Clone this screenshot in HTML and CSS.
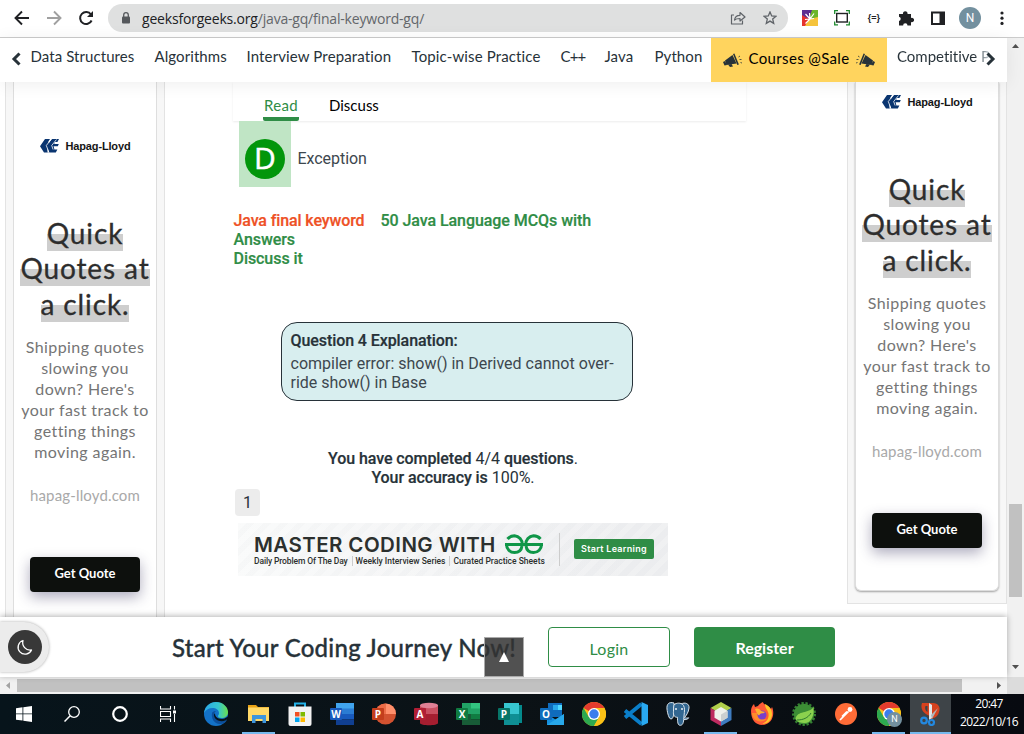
FILE: index.html
```html
<!DOCTYPE html>
<html lang="en">
<head>
<meta charset="utf-8">
<title>Java final keyword - GeeksforGeeks</title>
<link rel="stylesheet" href="styles.css">
</head>
<body>
<svg class="defs" aria-hidden="true">
  <symbol id="hl" viewBox="0 0 20 14"><path fill="#0a3570" d="M5 0h14l-1.600 3h-2.600l-.6 2h4.600l-1 2.200h-4.200l.8 3.400h3L15.800 13.500H4L0 7.300z"/><path stroke="#fff" stroke-width=".8" fill="none" d="M11.500 0L6.300 6.500l2.600 7M16.500 .5l-4.800 6 1.400 4"/><path fill="#fff" d="M10 0h1.800L9.300 3.500h-1.500zM7.500 9l1.800 4.500H7.500z"/></symbol>
  <symbol id="horn" viewBox="0 0 20 16"><g fill="#273239"><path d="M2 8.500l7.500-5.500 4 8.500-10 1.500z"/><path d="M0 10l2-1 2 4-2.500.6zM5 12.500l3.500-.5 1.500 2.500-3 .4z"/><path d="M10 2l1.400-.5 4.500 11-1.600.5z"/></g><path d="M15.500 5l1.500-1M16.500 7.500h2M17.500 10.500l1.500.5" stroke="#273239" stroke-width=".8" fill="none"/></symbol>
  <symbol id="chrome" viewBox="0 0 24 24"><circle cx="12" cy="12" r="12" fill="#fbc116"/><path fill="#e33b2e" d="M12 12L1.600 6A12 12 0 0 1 22.400 6H12z"/><path fill="#2da94f" d="M12 12L6.800 15 1.600 6A12 12 0 0 0 12 24l5.200-9z"/><path fill="#fbc116" d="M12 6h10.400A12 12 0 0 1 12 24l5.200-9z"/><circle cx="12" cy="12" r="6" fill="#fff"/><circle cx="12" cy="12" r="4.700" fill="#3b7ded"/></symbol>
</svg>

<header class="toolbar">
  <svg class="tb-back" width="16" height="16" viewBox="0 0 16 16"><path d="M15 8H2M8 1.500L1.500 8 8 14.500" fill="none" stroke="#202124" stroke-width="1.900"/></svg>
  <svg class="tb-fwd" width="16" height="16" viewBox="0 0 16 16"><path d="M1 8h13M8 1.500L14.500 8 8 14.500" fill="none" stroke="#a0a0a0" stroke-width="1.900"/></svg>
  <svg class="tb-reload" width="16" height="16" viewBox="0 0 16 16"><path d="M13.600 10.500A6 6 0 1 1 13 4.500" fill="none" stroke="#202124" stroke-width="2"/><path d="M15 1v6H9z" fill="#202124"/></svg>
  <div class="omnibox">
    <svg class="lock" width="10" height="12" viewBox="0 0 10 12"><rect x="1" y="4.500" width="8" height="7" rx="1" fill="#55585c"/><path d="M2.700 5V3a2.300 2.300 0 0 1 4.600 0v2" fill="none" stroke="#55585c" stroke-width="1.300"/></svg>
    <span class="url"><b>geeksforgeeks.org</b>/java-gq/final-keyword-gq/</span>
    <svg class="share" width="16" height="14" viewBox="0 0 16 14"><path d="M4 4H1.500v9h11V9.500M4.500 9c.5-3.500 3-4.700 5.500-4.700V1.500L15 6l-5 4V7.500c-2.500 0-4 0-5.500 1.500z" fill="none" stroke="#5f6368" stroke-width="1.200" stroke-linejoin="round"/></svg>
    <svg class="star" width="14" height="14" viewBox="0 0 14 14"><path d="M7 1l1.700 4 4.300.3-3.300 2.800 1 4.300L7 10.100l-3.700 2.300 1-4.300L1 5.300 5.300 5z" fill="none" stroke="#5f6368" stroke-width="1.300"/></svg>
  </div>
  <div class="extensions">
    <svg width="16" height="16" viewBox="0 0 16 16"><path fill="#5c2d91" d="M0 0h16v16H0z"/><path fill="#e5322d" d="M0 5l7 4-3 7H0z"/><path fill="#6bb52c" d="M10 0h6v8L7 9z"/><path fill="#f5c33b" d="M7 9l9-2v9H3z"/><path d="M3.500 4L8 9M8 9L7.500 3M8 9l4-5.500M8 9l-4.500 4.500M8 9l-5 .5M8 9l4-.5" stroke="#fff" stroke-width="1.200"/></svg>
    <svg width="16" height="16" viewBox="0 0 16 16"><path d="M.7 4V.7H4M12 .7h3.300V4M15.300 11.500v3.300H12M4 14.800H.7v-3.300" fill="none" stroke="#1e8a2f" stroke-width="1.300"/><rect x="2.700" y="3.500" width="10.600" height="8.500" fill="none" stroke="#202124" stroke-width="1.400"/></svg>
    <span class="braces">{=}</span>
    <svg width="16" height="16" viewBox="0 0 16 16"><path fill="#202124" d="M1 4h4a2.300 2.300 0 1 1 4.500 0H13v4a2.200 2.200 0 1 1 0 4v3.500H9.500a2.200 2.200 0 0 0-4.400 0H1V11a2.200 2.200 0 0 0 0-4.300z"/></svg>
    <svg width="16" height="16" viewBox="0 0 16 16"><rect x="2" y="2.500" width="12" height="11.500" fill="#fff" stroke="#202124" stroke-width="2"/><path fill="#202124" d="M9.500 2h5v12h-5z"/></svg>
    <span class="avatar">N</span>
    <svg width="16" height="16" viewBox="0 0 16 16"><g fill="#202124"><circle cx="8" cy="3" r="1.600"/><circle cx="8" cy="8.200" r="1.600"/><circle cx="8" cy="13.400" r="1.600"/></g></svg>
  </div>
</header>

<div class="viewport">
  <div class="page">
    <nav class="topnav">
      <svg class="chev" width="12" height="14" viewBox="0 0 12 14"><path d="M9.500 1.500L4 7l5.500 5.500" fill="none" stroke="#273239" stroke-width="3"/></svg>
      <div class="links">
        <a>Data Structures</a><a>Algorithms</a><a class="w">Interview Preparation</a><a class="w">Topic-wise Practice</a><a class="cpp">C++</a><a>Java</a><a>Python</a>
      </div>
      <div class="sale"><svg width="20" height="16"><use href="#horn"/></svg><span>Courses @Sale</span><svg class="flip" width="20" height="16"><use href="#horn"/></svg></div>
      <div class="last"><a>Competitive P</a></div>
      <svg class="chev-r" width="12" height="14" viewBox="0 0 12 14"><path d="M2.500 1.500L8 7l-5.500 5.500" fill="none" stroke="#273239" stroke-width="3"/></svg>
    </nav>

    <div class="columns">
      <aside class="ad ad-left">
        <div class="card">
          <div class="brand"><svg width="20" height="14"><use href="#hl"/></svg><span>Hapag-Lloyd</span></div>
          <h2><span>Quick</span><br><span>Quotes at</span><br><span>a click.</span></h2>
          <p>Shipping quotes<br>slowing you<br>down? Here's<br>your fast track to<br>getting things<br>moving again.</p>
          <div class="domain">hapag-lloyd.com</div>
          <div class="cta">Get Quote</div>
        </div>
      </aside>

      <main class="article">
        <div class="tabs"><span class="tab current">Read</span><span class="tab">Discuss</span></div>
        <div class="option"><div class="mark"><span>D</span></div><span>Exception</span></div>
        <div class="related"><a class="red">Java final keyword</a><a>50 Java Language MCQs with</a><br><a>Answers</a><br><a>Discuss it</a></div>
        <section class="explain"><b>Question 4 Explanation:</b><div>compiler error: show() in Derived cannot over-<br>ride show() in Base</div></section>
        <div class="result"><b>You have completed</b> 4/4 <b>questions</b>.<br><b>Your accuracy is</b> 100%.</div>
        <div class="pager">1</div>
        <div class="banner">
          <div class="pitch">
            <div class="line1"><span>MASTER CODING WITH</span>
              <svg width="40" height="21" viewBox="0 0 40 21"><g fill="none" stroke="#0f9648" stroke-width="3"><path d="M3.500 5C5.500 2.500 8 1.800 10.500 1.800a8.400 8.400 0 0 1 7.700 8.700H2.500c0 4.500 3.500 8 8 8s7-3 7.500-6.500"/><path d="M36.500 5c-2-2.500-4.500-3.200-7-3.200a8.400 8.400 0 0 0-7.700 8.700h15.700c0 4.500-3.500 8-8 8s-7-3-7.500-6.500"/><path d="M1 10.500h38"/></g></svg></div>
            <div class="line2"><span>Daily Problem Of The Day</span><span>Weekly Interview Series</span><span>Curated Practice Sheets</span></div>
          </div>
          <div class="start">Start Learning</div>
        </div>
      </main>

      <aside class="ad ad-right">
        <div class="card">
          <div class="brand"><svg width="20" height="14"><use href="#hl"/></svg><span>Hapag-Lloyd</span></div>
          <h2><span>Quick</span><br><span>Quotes at</span><br><span>a click.</span></h2>
          <p>Shipping quotes<br>slowing you<br>down? Here's<br>your fast track to<br>getting things<br>moving again.</p>
          <div class="domain">hapag-lloyd.com</div>
          <div class="cta">Get Quote</div>
        </div>
      </aside>
    </div>

    <footer class="signup">
      <div class="dark-toggle"><span><svg width="18" height="18" viewBox="0 0 18 18"><path d="M7 2.500A7 7 0 1 0 15.500 12 7.500 7.500 0 0 1 7 2.500z" fill="none" stroke="#fff" stroke-width="1.300" stroke-linejoin="round"/></svg></span></div>
      <span class="slogan">Start Your Coding Journey Now!</span>
      <div class="to-top"><svg width="10" height="10" viewBox="0 0 10 10"><path d="M5 0l5 10H0z" fill="#fff"/></svg></div>
      <a class="login">Login</a><a class="register">Register</a>
    </footer>
  </div>
  <div class="vscroll"><svg width="7" height="4" viewBox="0 0 7 4"><path d="M3.500 0L7 4H0z" fill="#505050"/></svg><div class="vthumb"></div><svg width="7" height="4" viewBox="0 0 7 4"><path d="M3.500 4L0 0h7z" fill="#505050"/></svg></div>
</div>
<div class="hscroll"><svg class="al" width="4" height="7" viewBox="0 0 4 7"><path d="M0 3.500L4 0v7z" fill="#a3a3a3"/></svg><div class="hthumb"></div><svg class="ar" width="4" height="7" viewBox="0 0 4 7"><path d="M4 3.500L0 0v7z" fill="#505050"/></svg><div class="corner"></div></div>

<div class="taskbar">
  <div class="sys"><svg width="16" height="16" viewBox="0 0 16 16"><path fill="#fff" d="M0 2.200L6.500 1.300v6.200H0zM7.300 1.200L16 0v7.500H7.300zM0 8.300h6.500v6.300L0 13.700zM7.300 8.300H16V16l-8.700-1.200z"/></svg></div>
  <div class="sys"><svg width="16" height="16" viewBox="0 0 16 16"><circle cx="10" cy="6" r="5.300" fill="none" stroke="#fff" stroke-width="1.300"/><path d="M6.200 9.800L.5 15.500" stroke="#fff" stroke-width="1.500"/></svg></div>
  <div class="sys"><svg width="16" height="16" viewBox="0 0 16 16"><circle cx="8" cy="8" r="6.800" fill="none" stroke="#fff" stroke-width="2.200"/></svg></div>
  <div class="sys"><svg width="16" height="16" viewBox="0 0 16 16"><path d="M.5 0v3h10V0M.5 16v-3h10v3M.5 5.500h10v5H.5zM14.500 0v3.500M14.500 8v8" fill="none" stroke="#fff" stroke-width="1.100"/><path fill="#fff" d="M13 4.500h3v3h-3z"/></svg></div>
  <div class="apps">
    <div class="app"><svg width="24" height="24" viewBox="0 0 24 24"><defs><linearGradient id="eg" x1="0" x2="1"><stop offset="0" stop-color="#2ba8e6"/><stop offset=".6" stop-color="#35c6d0"/><stop offset="1" stop-color="#6be04b"/></linearGradient></defs><circle cx="12" cy="12" r="12" fill="#1372c8"/><path fill="url(#eg)" d="M0 11C1 4 6 0 12 0c7 0 12 5 12 10 0 4-3 6-6.500 6-2.500 0-3.500-1-3.500-2 0-.8 1-1 1-3 0-3-3-5-6.500-5C5 6 2 7.500 0 11z"/><path fill="#0c4f9c" d="M8 11c-1 5 2 11 8 11 3 0 5-1 7-4-5 2-12 1-13-5 0-3 2-4 2-4s-3 0-4 2z"/><path fill="#07141b" d="M11 11.500c0 4 4 6 9 5.300l4-2.300v2l-2.500 2c-6 2-11-1-11.500-5 0-1.500.5-2 1-2z"/></svg></div>
    <div class="app open"><svg width="24" height="24" viewBox="0 0 24 24"><path fill="#e8a216" d="M1 3h8l2 2h11v5H1z"/><path fill="#ffd968" d="M1 5.500h21V19H1z"/><path fill="#3d95dd" d="M5 13h14v8h-3.500v-4h-7v4H5z"/></svg></div>
    <div class="app"><svg width="24" height="24" viewBox="0 0 24 24"><path d="M7 6V1.500h10V6" fill="none" stroke="#24b2e8" stroke-width="2"/><path fill="#f2f2f2" d="M.5 4.500h23V22a2 2 0 0 1-2 2h-19a2 2 0 0 1-2-2z"/><path fill="#f25022" d="M7 10h4.500v4.500H7z"/><path fill="#7fba00" d="M12.500 10H17v4.500h-4.500z"/><path fill="#00a4ef" d="M7 15.500h4.500V20H7z"/><path fill="#ffb900" d="M12.500 15.500H17V20h-4.500z"/></svg></div>
    <div class="app office word"><svg width="24" height="24" viewBox="0 0 24 24"><path fill="#41a5ee" d="M6 1h18v6H6z"/><path fill="#2b7cd3" d="M6 6.500h18V12H6z"/><path fill="#185abd" d="M6 12h18v5.500H6z"/><path fill="#103f91" d="M6 17.500h18V23H6z"/></svg><b>W</b></div>
    <div class="app office ppt"><svg width="24" height="24" viewBox="0 0 24 24"><circle cx="13.500" cy="12" r="10.500" fill="#d35230"/><path fill="#ff8f6b" d="M13.500 1.500A10.500 10.500 0 0 1 24 12H13.500z"/><path fill="#ed6c47" d="M13.500 1.500V12H3A10.500 10.500 0 0 1 13.500 1.500z"/></svg><b>P</b></div>
    <div class="app office access"><svg width="24" height="24" viewBox="0 0 24 24"><path fill="#c94f60" d="M6 3h18v10H6z"/><path fill="#a51e30" d="M6 12h18v9c0 3-18 3-18 0z"/><ellipse cx="15" cy="3.500" rx="9" ry="2.700" fill="#e08095"/></svg><b>A</b></div>
    <div class="app office excel"><svg width="24" height="24" viewBox="0 0 24 24"><path fill="#21a366" d="M6 1h18v11H6z"/><path fill="#33c481" d="M15 1h9v5.500h-9z"/><path fill="#107c41" d="M15 12h9v5.500h-9z"/><path fill="#185c37" d="M6 12h9v5.500h9V23H6z"/></svg><b>X</b></div>
    <div class="app office pub"><svg width="24" height="24" viewBox="0 0 24 24"><path fill="#048a8c" d="M10 3h14v18H10z"/><path fill="#37c6d0" d="M6 1h15v11H6z"/><path fill="#0f8f94" d="M6 12h15v11H6z"/></svg><b>P</b></div>
    <div class="app office outlook"><svg width="24" height="24" viewBox="0 0 24 24"><path fill="#0f6cbd" d="M8 1h14v14H8z"/><path fill="#28a8ea" d="M13 3h5v5h-5z"/><path fill="#50d9ff" d="M18 3h4v5h-4z"/><path fill="#1490df" d="M7 12l8.500 5.500L24 12v11H7z"/><path fill="#28a8ea" d="M24 12v11L7 23z"/></svg><b>O</b></div>
    <div class="app"><svg width="24" height="24"><use href="#chrome"/></svg></div>
    <div class="app"><svg width="24" height="24" viewBox="0 0 24 24"><path d="M1 8.500L17.500 22M1 15.500L17.500 2" stroke="#0a7ec9" stroke-width="3.800"/><path fill="#29a9f1" d="M17.500 0L24 3v18l-6.500 3z"/></svg></div>
    <div class="app"><svg width="24" height="24" viewBox="0 0 24 24"><g fill="#336791" stroke="#dce6ee" stroke-width="1"><path d="M8 1C3-.5.500 2 1 7c.4 4 2 10 4 10s2-3 3-4z"/><path d="M15 2c4-2 8.500-.5 8 4-.3 4-3 8-4.500 9.500 1 .8 3 .5 4.200.3-1 1.700-3 2-5 1.700z"/><path d="M9 2c3-1.500 7-1 8.500 1.500S18.500 9 18 14c-.3 5-.5 9-3.500 9.300-3 .3-3-4-3-8-3 .2-4.500-2-4-6C7.800 6 7 3.500 9 2z"/></g><circle cx="10" cy="7" r=".9" fill="#fff"/><circle cx="16" cy="7" r=".9" fill="#fff"/></svg></div>
    <div class="app open"><svg width="24" height="24" viewBox="0 0 24 24"><path fill="#b1cf4b" d="M12 0l10.500 6L12 12 1.500 6z"/><path fill="#be2b60" d="M1.500 6L12 12v12L1.500 18z"/><path fill="#3f7cc0" d="M22.500 6L12 12v12l10.500-6z"/><path fill="#eff1ec" d="M12 5l6.500 3.800v7L12 19.500l-6.500-3.700v-7z"/><path fill="#cbd0d0" d="M12 12.500l6.500-3.700v7L12 19.500z"/></svg></div>
    <div class="app"><svg width="24" height="24" viewBox="0 0 24 24"><path fill="#ff5a36" d="M1 9c0-3 1-5 3-7l1 3 3-1c1-2 3-3 5-4 0 3 6 3 8 7l1-2c3 6 1 18-10 18C6 23 1 18 1 9z"/><path fill="#ffc629" d="M15 2c4 2 7 5 7 10 0 6-4 10-10 10 5-2 8-7 6-12-1-3-3-4-3-8z"/><path fill="#ff8c2a" d="M2 12c1 7 9 10 15 5-5 1-9-1-10-6H2z"/><circle cx="12" cy="13" r="4.500" fill="#7940c9"/><path fill="#ffb02e" d="M5 7c3-1 5 0 6 2l4 1c-2 2-3 1-5 2-1 3-3 0-5-5z"/></svg></div>
    <div class="app"><svg width="24" height="24" viewBox="0 0 24 24"><circle cx="12" cy="12" r="10.800" fill="none" stroke="#357f32" stroke-width="2.400" stroke-dasharray="2.300 1.700"/><circle cx="12" cy="12" r="10.300" fill="#3c8d35"/><path fill="#8bd14e" d="M21.500 5c1 8-2 16-9 16-4 0-7-1-9-4C5 8 17 12 21.500 5z"/><path d="M5 18c6 0 11-2 14-7" fill="none" stroke="#2c7a2f" stroke-width="1"/></svg></div>
    <div class="app"><svg width="24" height="24" viewBox="0 0 24 24"><circle cx="12" cy="12" r="11" fill="#ff6c37"/><path d="M6 18l8.500-8.500M8 14.500l5-5" stroke="#fff" stroke-width="1.700"/><circle cx="16" cy="7.500" r="2.400" fill="#fff"/></svg></div>
    <div class="app open"><svg width="24" height="24"><use href="#chrome"/></svg><span class="badge">N</span></div>
    <div class="app open active"><svg width="24" height="24" viewBox="0 0 24 24"><path fill="#d6421e" d="M3 1h11c5 0 8 4 6 9-1 4-4 6-8 7l-1-3C4 12 1 6 3 1z"/><path fill="#3e4448" d="M6.500 4h2v6c-2-1-3-4-2-6z"/><path fill="#e4e6e7" d="M10 1l3 2v13l-3 2z"/><path fill="#aeb4b8" d="M19 6l-6 11-1-4z"/><g fill="none" stroke="#2389e0" stroke-width="2.200"><circle cx="5" cy="18.500" r="2.800"/><circle cx="12.500" cy="20.500" r="2.500"/></g></svg></div>
  </div>
  <div class="clock"><span>20:47</span><span>2022/10/16</span></div>
</div>
</body>
</html>
```

FILE: styles.css
```css
* { box-sizing: border-box; }
body { margin: 0; width: 1024px; height: 734px; overflow: hidden; display: flex; flex-direction: column; background: #fff; color: #273239; font-family: Roboto, sans-serif; }
svg { display: block; flex: none; }
.defs { width: 0; height: 0; position: absolute; }

/* Browser toolbar */
.toolbar { flex: none; height: 38px; padding: 0 0 1px 14px; display: flex; align-items: center; border-bottom: 1px solid #ccc; background: #fff; }
.tb-fwd, .tb-reload { margin-left: 16px; }
.omnibox { margin-left: 14px; width: 680px; height: 28px; border-radius: 14px; background: #dfe0e0; display: flex; align-items: center; padding: 0 11px 0 13px; }
.url { margin-left: 11px; margin-right: auto; font: 14px "Open Sans", sans-serif; letter-spacing: -.19px; color: #63666a; }
.url b { font-weight: 400; color: #202124; }
.star { margin-left: 17px; }
.extensions { margin-left: 6px; display: grid; grid-template-columns: repeat(7, 32px); width: 224px; justify-items: center; align-items: center; }
.braces { font: 700 9px "Liberation Sans", sans-serif; color: #202124; }
.avatar { width: 22px; height: 22px; border-radius: 50%; background: #73909f; color: #fff; font: 12px/22px Roboto, sans-serif; text-align: center; }

/* Web page area */
.viewport { flex: none; height: 639px; display: flex; }
.page { width: 1007px; display: flex; flex-direction: column; }
.topnav { flex: none; height: 44px; display: flex; position: relative; z-index: 2; background: #fff; font: 15px/20px Lato, sans-serif; letter-spacing: .08px; box-shadow: 0 2px 18px rgba(0,0,0,.07); color: #273239; }
.chev { margin: 14px 0 0 10px; }
.links { margin-left: 8.500px; width: 680.500px; padding-top: 8px; display: grid; grid-template-columns: 124px 92px 165px 149px 44px 50px 56px; white-space: nowrap; }
.links .w { letter-spacing: .13px; }
.links .cpp { letter-spacing: -.8px; }
.sale { width: 176px; background: #ffd45e; color: #000; display: flex; align-items: center; padding: 0 12px 5px; white-space: nowrap; letter-spacing: .36px; justify-content: space-between; }
.sale svg { margin-top: 5px; }
.flip { transform: scaleX(-1); }
.last { margin-left: 10px; padding-top: 8px; width: 88px; white-space: nowrap; }
.last a { background: linear-gradient(90deg, #273239 84%, #b9c3c9 98%); background-clip: text; color: transparent; letter-spacing: -.02px; }
.chev-r { margin: 14px 0 0 0; }

.columns { flex: none; height: 535px; display: flex; align-items: flex-start; overflow: hidden; background: #fff; }
.ad { flex: none; width: 160px; border: 1px solid #e3e3e3; border-top: 0; background: #f7f7f7; padding: 0 7px; }
.ad-left { margin-left: 5px; height: 600px; }
.ad-right { height: 522px; }
.card { height: 560px; width: 144px; background: #fff; border: 1px solid #dedede; border-top: 0; text-align: center; font-family: Lato, sans-serif; padding-top: 54px; }
.ad-right .card { height: 509px; padding-top: 10px; border-radius: 0 0 6px 6px; box-shadow: 0 1px 2px rgba(0,0,0,.35); }
.brand { height: 20px; display: flex; align-items: center; justify-content: center; gap: 6px; font: 700 11px "Liberation Sans", sans-serif; letter-spacing: -.15px; color: #151515; }
.card h2 { margin: 59.500px -4px 0; font-weight: 400; font-size: 28px; line-height: 35.5px; letter-spacing: .87px; color: #2d2d2d; -webkit-text-stroke: .3px; }
.card h2 span { padding-bottom: 1px; background: linear-gradient(transparent 52%, #cecece 52%); }
.card p { margin: 15px -4px 0; font-size: 16px; line-height: 20.900px; letter-spacing: .42px; color: #757575; }
.domain { margin-top: 23.500px; font-size: 15px; line-height: 18px; letter-spacing: .15px; color: #a9a9a9; }
.cta { width: 110px; height: 35px; margin: 53px auto 0; border-radius: 4px; background: #0d100d; color: #fff; font: 700 13px/33px Lato, sans-serif; box-shadow: 0 5px 14px rgba(50,45,90,.4); }

.article { flex: none; width: 682px; padding-left: 68px; font-size: 16px; line-height: 19px; }
.tabs { width: 513px; height: 39px; display: flex; gap: 30px; padding: 14px 0 0 30px; background: #fff; box-shadow: 0 1px 2px rgba(0,0,0,.08); font: 15px/20px Lato, sans-serif; color: #000; }
.tab { margin-top: -1px; }
.tab.current { width: 36px; height: 26px; padding-left: 1px; letter-spacing: .3px; color: #2f8d46; border-bottom: 4px solid #2f8d46; border-radius: 0 0 2px 2px; }
.option { display: flex; align-items: center; gap: 6.500px; margin-left: 6px; height: 66px; }
.option > span { padding-top: 8px; color: #3d474e; letter-spacing: -.05px; }
.mark { width: 52px; height: 66px; background: #c0e5c5; padding: 18px 6px 0; }
.mark span { display: block; width: 40px; height: 40px; border-radius: 50%; background: #02960b; color: #fff; font: 30px/38px "Open Sans", sans-serif; -webkit-text-stroke: .5px #fff; text-align: center; }
.related { margin: 24px 0 0 .5px; color: #2f8d46; font-weight: 500; letter-spacing: -.06px; -webkit-text-stroke: .2px; }
.related .red { color: #ee5126; margin-right: 16px; letter-spacing: -.12px; }
.explain { margin: 54px 0 0 48px; width: 352px; height: 79px; border: 1px solid #273239; border-radius: 16px; background: #d8eeef; padding: 8px 0 0 8.500px; white-space: nowrap; }
.explain b, .result b { font-weight: 500; letter-spacing: -.08px; -webkit-text-stroke: .2px; }
.explain div { margin-top: 4px; color: #3d474e; }
.result { margin-top: 48px; width: 440px; text-align: center; }
.pager { margin: 2px 0 0 2px; width: 25px; height: 27px; line-height: 27px; border-radius: 4px; background: #ececec; text-align: center; }
.banner { margin: 7px 0 0 5px; width: 430px; height: 53px; display: flex; align-items: flex-start; padding: 10px 0 0 16px; background: repeating-linear-gradient(135deg, rgba(255,255,255,.16) 0 6px, rgba(225,227,230,.1) 6px 12px), linear-gradient(90deg, #f9fafa, #edeef0 90%); }
.pitch { width: 306px; height: 33px; border-right: 1px solid #ccc; white-space: nowrap; color: #2c302e; }
.line1 { display: flex; align-items: center; gap: 8px; height: 22px; font: 600 20.500px/22px Inter, sans-serif; letter-spacing: .42px; padding-top: 1px; }
.line2 { display: flex; gap: 4px; font: 500 8.500px/10px Roboto, sans-serif; letter-spacing: -.12px; margin-top: 1px; }
.line2 span + span { border-left: 1px solid #ccc; padding-left: 3px; letter-spacing: -.01px; }
.start { margin: 6px 0 0 14px; width: 80px; height: 20px; border-radius: 2px; background: #2f8d46; color: #fff; font: 600 9px/20px Inter, sans-serif; letter-spacing: .3px; text-align: center; white-space: nowrap; }

.signup { flex: none; height: 60px; position: relative; z-index: 2; display: flex; align-items: center; background: #fff; box-shadow: 0 -1px 6px rgba(0,0,0,.3); font-family: Lato, sans-serif; }
.dark-toggle { width: 49px; height: 50px; margin-top: -1px; border-radius: 0 25px 25px 0; background: #ececec; box-shadow: 0 0 3px rgba(0,0,0,.35); padding: 8px 7.500px; }
.dark-toggle span { width: 34px; height: 34px; border-radius: 50%; background: #383838; display: flex; align-items: center; justify-content: center; }
.slogan { margin-left: 123px; width: 376px; font-weight: 500; font-size: 24px; letter-spacing: .27px; white-space: nowrap; -webkit-text-stroke: .35px; }
.to-top { position: absolute; left: 484px; top: 20px; width: 40px; height: 40px; background: rgba(50,50,50,.85); border: 1px solid #aaa; display: flex; align-items: center; justify-content: center; }
.login, .register { height: 40px; border-radius: 4px; text-align: center; font-size: 16px; line-height: 41px; }
.login { width: 122px; border: 1px solid #2f8d46; color: #2f8d46; letter-spacing: .25px; }
.register { margin-left: 24px; width: 141px; background: #2f8d46; color: #fff; font-weight: 700; line-height: 42px; }

/* Scrollbars */
.vscroll { width: 17px; background: #f1f1f1; display: flex; flex-direction: column; align-items: center; padding: 6px 1px 8px 0; }
.vthumb { width: 13px; height: 93px; margin: 456px 0 auto; background: #c1c1c1; }
.hscroll { flex: none; height: 17px; background: #f1f1f1; display: flex; align-items: center; padding-left: 6px; }
.hthumb { margin-left: 7px; width: 945px; height: 13px; background: #c1c1c1; }
.ar { margin-left: 35px; }
.corner { margin-left: auto; width: 17px; height: 17px; background: #dcdcdc; }

/* Taskbar */
.taskbar { flex: none; height: 40px; display: flex; background: linear-gradient(90deg, #07141b, #0b1216 50%, #070a10); }
.sys { width: 48px; display: flex; align-items: center; justify-content: center; }
.apps { margin-left: 3px; display: grid; grid-template-columns: repeat(18, 42px); }
.app { display: flex; align-items: center; justify-content: center; position: relative; }
.open { box-shadow: inset 0 -2px #76b9ed; margin: 0 4px 0 5px; }
.active { background: #3e4448; margin: 0 0 0 1px; }
.office b { position: absolute; left: 9px; top: 14px; width: 12px; height: 12px; font: 700 10px/12px "Open Sans", sans-serif; color: #fff; text-align: center; border-radius: 1px; }
.word b { background: #185abd; }
.ppt b { background: #c43e1c; }
.access b { background: #b11e35; }
.excel b { background: #107c41; }
.pub b { background: #077568; }
.outlook b { background: #0f6cbd; }
.badge { position: absolute; left: 15px; top: 18px; width: 15px; height: 15px; border-radius: 50%; background: #73909f; color: #fff; font: 9px/15px Roboto, sans-serif; text-align: center; }
.clock { flex: 1; padding: 1px 0 0 3px; display: flex; flex-direction: column; align-items: center; color: #fff; font: 12px/18px "Open Sans", sans-serif; letter-spacing: -.57px; }
```
